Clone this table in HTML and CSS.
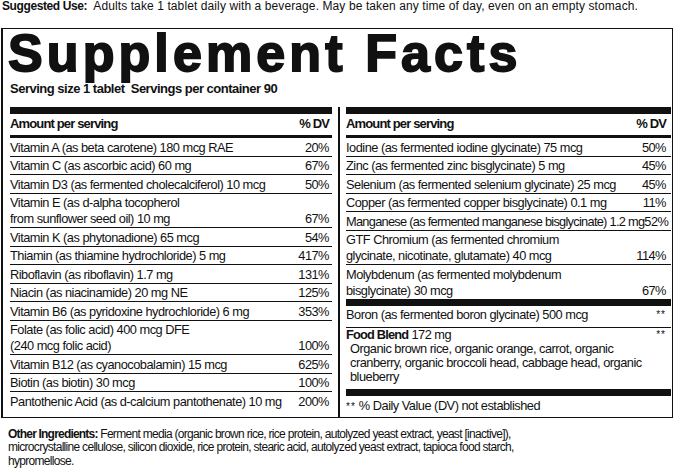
FILE: index.html
```html
<!DOCTYPE html>
<html lang="en">
<head>
<meta charset="utf-8">
<title>Supplement Facts</title>
<link rel="stylesheet" href="styles.css">
</head>
<body>
<div class="use"><b>Suggested Use:</b>&nbsp; Adults take 1 tablet daily with a beverage. May be taken any time of day, even on an empty stomach.</div>
<section class="panel">
  <h1 class="title">Supplement Facts</h1>
  <p class="serving">Serving size 1 tablet&nbsp; Servings per container 90</p>
  <div class="cols">
    <div class="col col-left">
      <div class="bar"></div>
      <div class="head"><span>Amount per serving</span><span>% DV</span></div>
      <div class="row"><span class="name">Vitamin A (as beta carotene) 180 mcg RAE</span><span class="dv">20%</span></div>
      <div class="row"><span class="name">Vitamin C (as ascorbic acid) 60 mg</span><span class="dv">67%</span></div>
      <div class="row"><span class="name">Vitamin D3 (as fermented cholecalciferol) 10 mcg</span><span class="dv">50%</span></div>
      <div class="row"><span class="name">Vitamin E (as d-alpha tocopherol<br>from sunflower seed oil) 10 mg</span><span class="dv">67%</span></div>
      <div class="row"><span class="name">Vitamin K (as phytonadione) 65 mcg</span><span class="dv">54%</span></div>
      <div class="row"><span class="name">Thiamin (as thiamine hydrochloride) 5 mg</span><span class="dv">417%</span></div>
      <div class="row"><span class="name">Riboflavin (as riboflavin) 1.7 mg</span><span class="dv">131%</span></div>
      <div class="row"><span class="name">Niacin (as niacinamide) 20 mg NE</span><span class="dv">125%</span></div>
      <div class="row"><span class="name">Vitamin B6 (as pyridoxine hydrochloride) 6 mg</span><span class="dv">353%</span></div>
      <div class="row"><span class="name">Folate (as folic acid) 400 mcg DFE<br>(240 mcg folic acid)</span><span class="dv">100%</span></div>
      <div class="row"><span class="name">Vitamin B12 (as cyanocobalamin) 15 mcg</span><span class="dv">625%</span></div>
      <div class="row"><span class="name">Biotin (as biotin) 30 mcg</span><span class="dv">100%</span></div>
      <div class="row row-end"><span class="name">Pantothenic Acid (as d-calcium pantothenate) 10 mg</span><span class="dv">200%</span></div>
    </div>
    <div class="col col-right">
      <div class="bar"></div>
      <div class="head"><span>Amount per serving</span><span>% DV</span></div>
      <div class="row"><span class="name">Iodine (as fermented iodine glycinate) 75 mcg</span><span class="dv">50%</span></div>
      <div class="row"><span class="name">Zinc (as fermented zinc bisglycinate) 5 mg</span><span class="dv">45%</span></div>
      <div class="row"><span class="name">Selenium (as fermented selenium glycinate) 25 mcg</span><span class="dv">45%</span></div>
      <div class="row"><span class="name">Copper (as fermented copper bisglycinate) 0.1 mg</span><span class="dv">11%</span></div>
      <div class="row"><span class="name tight">Manganese (as fermented manganese bisglycinate) 1.2 mg</span><span class="dv">52%</span></div>
      <div class="row"><span class="name">GTF Chromium (as fermented chromium<br>glycinate, nicotinate, glutamate) 40 mcg</span><span class="dv">114%</span></div>
      <div class="row row-end"><span class="name">Molybdenum (as fermented molybdenum<br>bisglycinate) 30 mcg</span><span class="dv">67%</span></div>
      <div class="bar"></div>
      <div class="row row-boron"><span class="name">Boron (as fermented boron glycinate) 500 mcg</span><span class="dv stars">**</span></div>
      <div class="blend">
        <div class="blend-head"><span><b>Food Blend</b> 172 mg</span><span class="stars">**</span></div>
        <p class="blend-list">Organic brown rice, organic orange, carrot, organic<br>cranberry, organic broccoli head, cabbage head, organic<br>blueberry</p>
      </div>
      <div class="bar"></div>
      <p class="foot"><span class="stars">**</span> % Daily Value (DV) not established</p>
    </div>
  </div>
</section>
<p class="other"><b>Other Ingredients:</b> Ferment media (organic brown rice, rice protein, autolyzed yeast extract, yeast [inactive]),<br>microcrystalline cellulose, silicon dioxide, rice protein, stearic acid, autolyzed yeast extract, tapioca food starch,<br>hypromellose.</p>
</body>
</html>
```
FILE: styles.css
```css
html, body {
  margin: 0;
  background: #fff;
}
body {
  font-family: "Liberation Sans", Arial, sans-serif;
  font-size: 12.8px;
  letter-spacing: -0.5px;
  color: #111;
}
.use {
  font-size: 12px;
  line-height: 14px;
  letter-spacing: 0.1px;
  margin: -1px 0 0 2px;
  white-space: nowrap;
}
.use b {
  letter-spacing: -0.4px;
}
.panel {
  margin: 15px 0 0 1px;
  width: 661px;
  border: 1px solid #111;
  border-left-width: 2px;
  padding: 0 1px 0 7px;
}
.title {
  margin: 0 0 0 -2px;
  font-weight: 700;
  font-size: 52px;
  line-height: 48px;
  letter-spacing: 4.1px;
  -webkit-text-stroke: 1.8px #111;
  white-space: nowrap;
}
.serving {
  margin: 4px 0 10px;
  font-size: 13px;
  font-weight: 700;
  line-height: 16px;
  letter-spacing: -0.5px;
}
.cols {
  display: grid;
  grid-template-columns: 322px minmax(0, 1fr);
}
.col-right {
  margin-left: 6px;
  border-left: 2px solid #111;
  padding-left: 6px;
}
.bar {
  height: 7px;
  background: #111;
}
.head {
  display: flex;
  justify-content: space-between;
  font-size: 13px;
  font-weight: 700;
  letter-spacing: -0.85px;
  line-height: 16px;
  padding: 2px 3px 3px 0;
  border-bottom: 3px solid #111;
}
.row {
  display: flex;
  justify-content: space-between;
  align-items: flex-end;
  line-height: 16px;
  padding: 1.5px 3px 0 0;
  border-bottom: 1px solid #111;
}
.name {
  white-space: nowrap;
}
.tight {
  letter-spacing: -0.72px;
}
.dv {
  flex-shrink: 0;
}
.row-end {
  border-bottom: none;
}
.col-right .head,
.col-right .row {
  padding-right: 5px;
}
.col-right .row-boron {
  padding-top: 1px;
  padding-bottom: 4px;
}
.stars {
  font-size: 10px;
  letter-spacing: 1px;
}
.blend-head {
  display: flex;
  justify-content: space-between;
  line-height: 14px;
  padding-right: 5px;
}
.blend-head b {
  letter-spacing: -0.8px;
}
.blend-list {
  margin: 0 0 5px 4px;
  line-height: 14px;
}
.foot {
  margin: 0;
  line-height: 16px;
  padding: 2px 0 2px;
}
.other {
  margin: 10px 0 0 8px;
  font-size: 12px;
  letter-spacing: -0.7px;
  line-height: 13.5px;
  white-space: nowrap;
}
.other b {
  letter-spacing: -0.8px;
}
```
